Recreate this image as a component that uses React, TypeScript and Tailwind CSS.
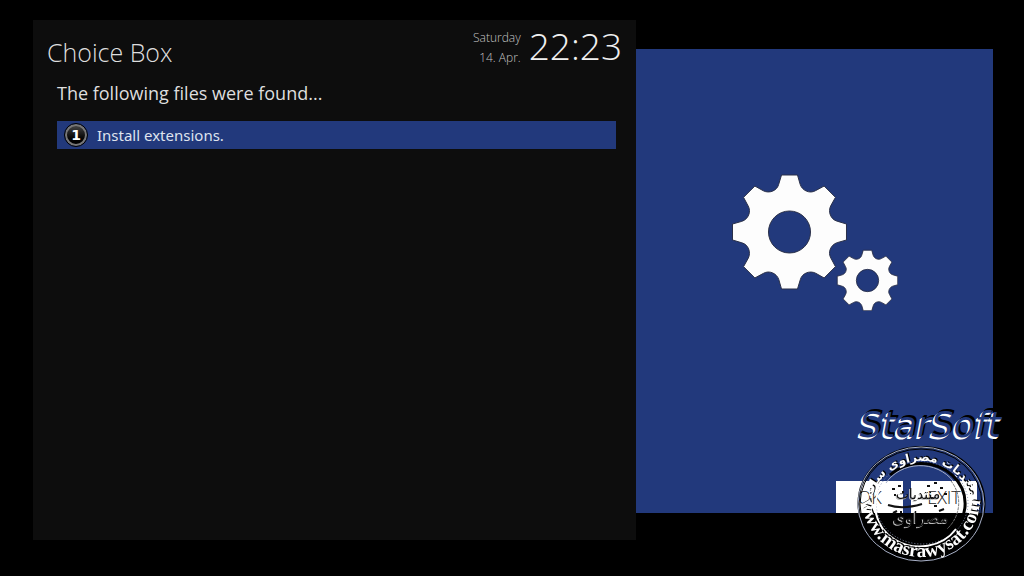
import React from "react";

/** Builds the outline of an eight-toothed gear centred on the origin. */
function gearPath(): string {
  const profile: [number, number][] = [
    [-24, -171],
    [24, -171],
    [32, -143],
    [38, -124],
    [61, -114],
    [78, -124],
  ];
  let d = "";
  for (let tooth = 0; tooth < 8; tooth++) {
    const a = (tooth * Math.PI) / 4;
    const p = profile.map(([x, y]) =>
      [x * Math.cos(a) - y * Math.sin(a), x * Math.sin(a) + y * Math.cos(a)]
        .map((n) => n.toFixed(1))
        .join(" "),
    );
    d += `${tooth === 0 ? "M" : "L"}${p[0]}L${p[1]}L${p[2]}C${p[3]} ${p[4]} ${p[5]}`;
  }
  return d + "ZM63 0A63 63 0 1 0 -63 0A63 63 0 1 0 63 0Z";
}

const GEAR = gearPath();

function Gears() {
  return (
    <svg viewBox="0 0 166 137" className="h-[137px] w-[166px]" aria-hidden="true">
      <g fill="#fdfdfd" stroke="#2a3048" fillRule="evenodd">
        <path d={GEAR} strokeWidth="3" transform="translate(57.5 58) scale(.3333)" />
        <path d={GEAR} strokeWidth="5" transform="translate(135.5 106.5) scale(.177)" />
      </g>
    </svg>
  );
}

function NumberBadge({ value }: { value: number }) {
  return (
    <span className="flex size-[22px] shrink-0 items-center justify-center rounded-full border-2 border-[#777] bg-linear-to-b from-[#444] to-black font-['DejaVu_Sans',sans-serif] text-sm leading-none font-bold text-white outline-1 outline-black">
      {value}
    </span>
  );
}

function Stamp() {
  return (
    <svg viewBox="0 0 130 118" className="h-[118px] w-[130px]" role="img" aria-label="www.masrawysat.com">
      <defs>
        <path id="arc-top" d="M15 62A50 46 0 0 1 115 62" />
        <path id="arc-bottom" d="M6 50A59 59 0 0 0 65 112A59 59 0 0 0 124 50" />
      </defs>
      <g fill="none">
        <ellipse cx="65.500" cy="58.500" rx="63" ry="56.500" stroke="#000" strokeWidth="2" />
        <ellipse cx="65" cy="59" rx="63" ry="57" stroke="#a9b1c8" strokeWidth="1" />
        <ellipse cx="65" cy="59" rx="61" ry="55" stroke="#000" strokeWidth="1" />
        <ellipse cx="66" cy="58" rx="46" ry="41" stroke="#8791b0" strokeWidth="1" strokeDasharray="1 2" />
        <path d="M34 30A43 39 0 0 1 96 87" stroke="#000" strokeWidth="3" />
        <path d="M27 39A43 39 0 0 0 100 84" stroke="#fff" strokeWidth="2" />
        <path d="M30 38A40 36 0 0 1 97 36" stroke="#a9b1c8" strokeWidth="1" />
        <path d="M95 36A40 37 0 0 1 91 84" stroke="#777" strokeWidth="1" strokeDasharray="3 1" />
      </g>
      <text
        fill="#fff"
        fontFamily="'DejaVu Sans', sans-serif"
        fontWeight="bold"
        fontSize="12"
        textAnchor="middle"
        direction="rtl"
        style={{ filter: "drop-shadow(1px -1px 0 #000)" }}
      >
        <textPath href="#arc-top" startOffset="50%">
          منتديات مصراوى سات
        </textPath>
      </text>
      <text
        fill="#fff"
        fontFamily="'Liberation Serif', serif"
        fontWeight="bold"
        fontSize="19"
        textAnchor="middle"
        style={{ filter: "drop-shadow(1px -1px 0 #000)" }}
      >
        <textPath href="#arc-bottom" startOffset="50%">
          www.masrawysat.com
        </textPath>
      </text>
      <g
        fontFamily="'DejaVu Sans', sans-serif"
        textAnchor="middle"
        direction="rtl"
        fill="#111"
        style={{ filter: "drop-shadow(-1px 1px 0 #bbb)" }}
      >
        <text x="62" y="54" fontSize="14">منتديات</text>
        <text x="65" y="78" fontSize="16">مصراوى</text>
      </g>
      <g fill="none" stroke="#111" strokeWidth="2">
        <path d="M32 60C44 64 56 62 66 59" />
        <path d="M36 44h3M42 41h3M46 47h2M38 50h2M71 41h3M78 38h3M84 43h3M88 49h3M37 68l4-2M83 66l5-2M44 67h2M78 61h3" />
      </g>
    </svg>
  );
}

export default function App() {
  return (
    <main className="flex min-h-screen bg-black pt-5 pr-[31px] pb-9 pl-[33px] font-['Open_Sans',sans-serif] text-[#dedede]">
      <section className="flex flex-[603] flex-col bg-[#0d0d0d]">
        <header className="flex items-start justify-between pr-[14px] pl-[14px]">
          <h1 className="pt-3 text-[25px] leading-10 font-light">Choice Box</h1>
          <div className="flex items-start gap-2">
            <p className="pt-2 text-right text-xs leading-5 font-light text-[#c4c4c4]">
              Saturday
              <br />
              14. Apr.
            </p>
            <time className="pt-1 text-[37px] leading-[44px] font-light text-[#f0f0f0]">22:23</time>
          </div>
        </header>
        <p className="px-6 pt-2 text-lg leading-[26px]">The following files were found...</p>
        <ul className="pt-[15px] pr-5 pl-6">
          <li>
            <button className="flex h-7 w-full items-center gap-[10px] bg-[#22397c] pl-2 text-left font-['Noto_Sans','Open_Sans',sans-serif] text-[15px] text-[#dfe3ee]">
              <NumberBadge value={1} />
              Install extensions.
            </button>
          </li>
        </ul>
      </section>
      <aside className="relative mt-[29px] mb-[27px] flex flex-[357] flex-col bg-[#22397c]">
        <div className="flex flex-1 justify-center pt-[125px]">
          <Gears />
        </div>
        <div className="flex justify-end gap-2 pr-4 font-light">
          <button className="h-8 w-[67px] bg-white text-lg text-[#222]">OK</button>
          <button className="h-8 w-[66px] bg-white text-lg text-[#222]">EXIT</button>
        </div>
        <div className="pointer-events-none absolute -right-2 bottom-[68px] font-['DejaVu_Sans',sans-serif] text-[35px] leading-10 font-extralight text-[#22397c] italic [text-shadow:-1px_1px_0_#fff,-2px_2px_0_#fff,1px_-1px_0_#000,2px_-2px_0_#000]">
          StarSoft
        </div>
        <div className="pointer-events-none absolute right-[7px] bottom-[-50px]">
          <Stamp />
        </div>
      </aside>
    </main>
  );
}
